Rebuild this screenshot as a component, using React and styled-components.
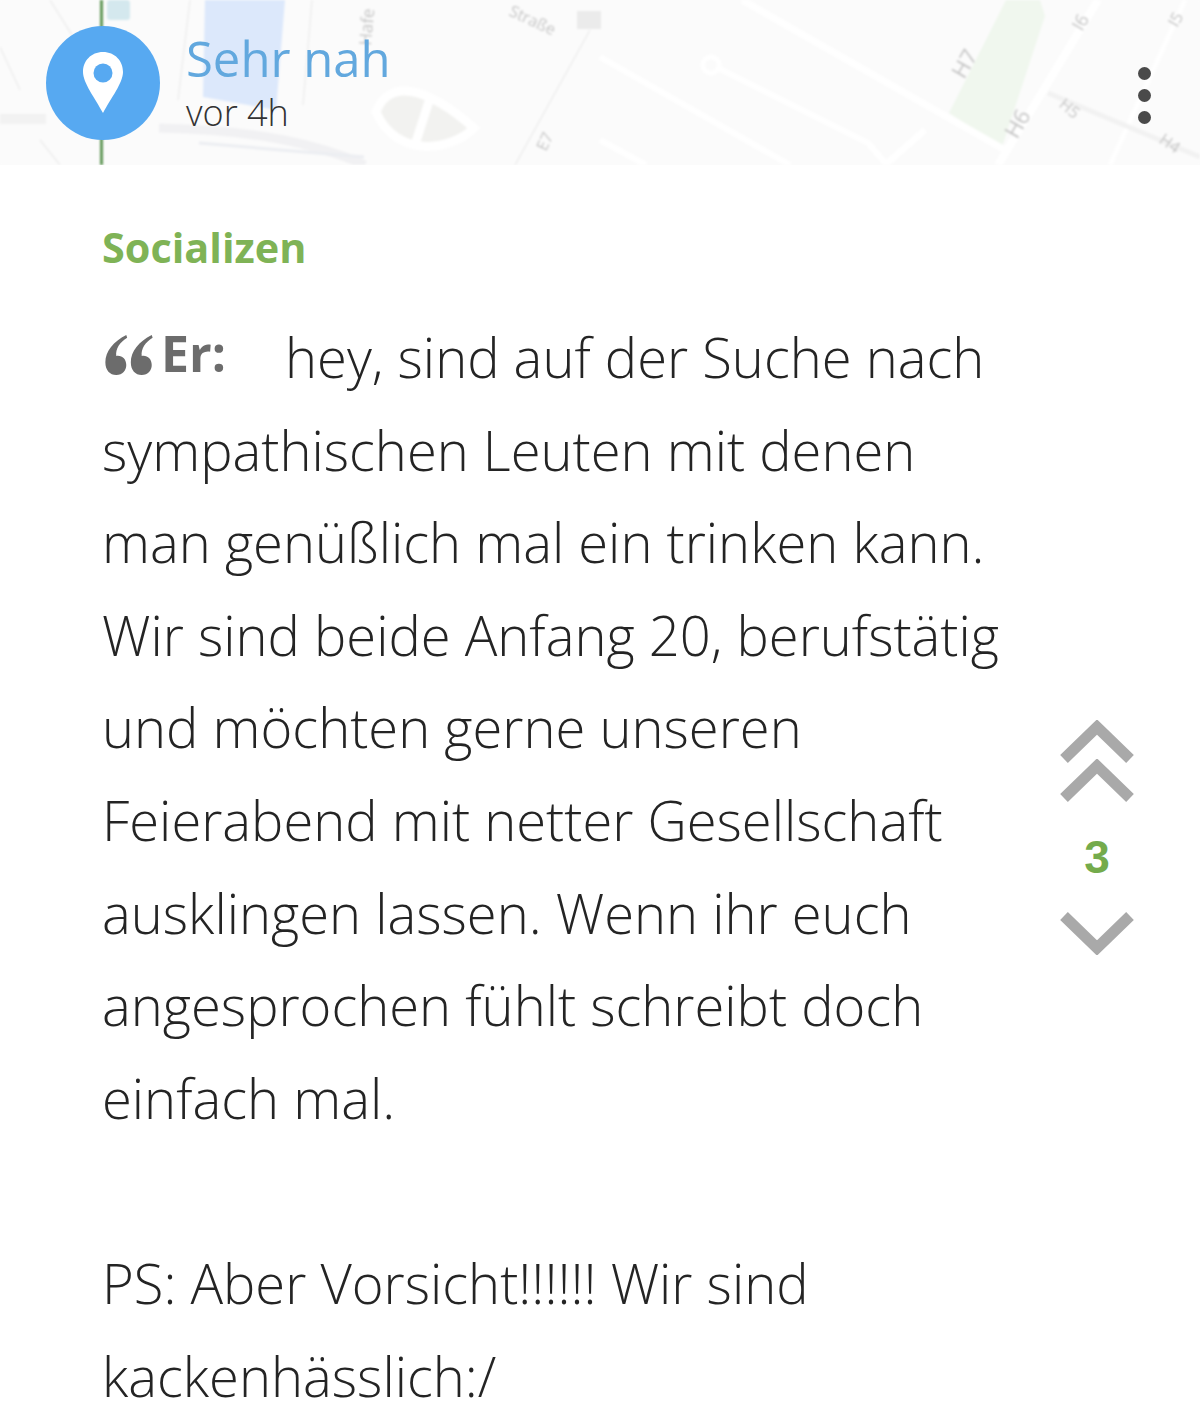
import React from "react";
import styled, { createGlobalStyle } from "styled-components";

const Global = createGlobalStyle`
  html, body { margin: 0; padding: 0; background: #fff; }
  body { font-family: "Open Sans", "Liberation Sans", sans-serif; }
`;
const Page = styled.div`
  width: 1200px;
  height: 1417px;
  overflow: hidden;
  background: #fff;
`;
const Header = styled.header`
  position: relative;
  height: 165px;
  display: flex;
  align-items: center;
  padding: 0 49px 0 46px;
  box-sizing: border-box;
  background: #fbfbfb;
  overflow: hidden;
`;
const MapArt = styled.svg`
  position: absolute;
  inset: 0;
  width: 100%;
  height: 100%;
  filter: blur(0.8px);
`;
const Badge = styled.div`
  position: relative;
  width: 114px;
  height: 114px;
  border-radius: 50%;
  background: #57a9f1;
  display: flex;
  align-items: center;
  justify-content: center;
  flex: none;
`;
const Meta = styled.div`
  position: relative;
  margin-left: 26px;
  display: flex;
  flex-direction: column;
  flex: 1;
`;
const Title = styled.div`
  font-size: 49px;
  line-height: 56px;
  color: #62a8de;
  margin-top: -1px;
`;
const Time = styled.div`
  font-size: 36px;
  line-height: 42px;
  font-weight: 300;
  color: #333;
  margin-top: 6px;
`;
const MoreBtn = styled.div`
  position: relative;
  display: flex;
  flex-direction: column;
  gap: 9px;
  margin-top: 25px;
`;
const Dot = styled.span`
  width: 13px;
  height: 13px;
  border-radius: 50%;
  background: #4a4a4a;
`;
const Body = styled.main`
  display: flex;
  padding: 57px 0 0 102px;
`;
const Content = styled.div`
  width: 956px;
  flex: none;
`;
const Category = styled.div`
  font-size: 41.4px;
  line-height: 50px;
  font-weight: 700;
  color: #7fb356;
  margin-bottom: 39px;
`;
const Line = styled.div`
  font-size: 54.3px;
  line-height: 92.6px;
  height: 92.6px;
  font-weight: 300;
  color: #242424;
  white-space: nowrap;
`;
const Lead = styled.span`
  display: inline-flex;
  align-items: flex-end;
  width: 183px;
  height: 46px;
  vertical-align: 0;
  position: relative;
  top: -3px;
`;
const QuoteMark = styled.svg`
  width: 54px;
  height: 40px;
  flex: none;
`;
const Author = styled.span`
  font-size: 50px;
  line-height: 44px;
  font-weight: 700;
  color: #6c6c6c;
  margin-left: 5px;
`;
const Votes = styled.aside`
  width: 76px;
  margin: 498px 0 0 1px;
  display: flex;
  flex-direction: column;
  align-items: center;
  flex: none;
`;
const Score = styled.div`
  font-family: "Liberation Sans", Arial, sans-serif;
  font-size: 46px;
  line-height: 50px;
  font-weight: 700;
  color: #74ab4c;
  margin: 29px 0 29px;
`;
const ChevronArt = styled.svg`
  display: block;
  width: 76px;
`;
const DoubleUp = styled.div`
  display: flex;
  flex-direction: column;
  & > svg + svg { margin-top: -5px; }
`;

const lines = [
  "sympathischen Leuten mit denen",
  "man genüßlich mal ein trinken kann.",
  "Wir sind beide Anfang 20, berufstätig",
  "und möchten gerne unseren",
  "Feierabend mit netter Gesellschaft",
  "ausklingen lassen. Wenn ihr euch",
  "angesprochen fühlt schreibt doch",
  "einfach mal.",
  "\u00a0",
  "PS: Aber Vorsicht!!!!!! Wir sind",
  "kackenhässlich:/",
];

function MapBackground() {
  const road = { stroke: "#ffffff", fill: "none" };
  const faint = { stroke: "#eeeeee", fill: "none", strokeWidth: 1.5 };
  const label = { fill: "#c6c6c6", fontFamily: "Open Sans, sans-serif" };
  return (
    <MapArt viewBox="0 0 1200 165" aria-hidden="true">
      <rect width="1200" height="165" fill="#fbfbfb" />
      <polygon points="205,0 285,0 276,110 203,97" fill="#dce8fb" />
      <polygon points="1006,0 1040,0 1045,16 1002,147 949,113" fill="#f0f7ee" />
      <g {...road}>
        <path d="M600 57 L790 165" strokeWidth="6" />
        <path d="M742 0 L1005 150" strokeWidth="7" />
        <path d="M718 68 L868 143 L887 165" strokeWidth="6" />
        <path d="M925 130 L885 165" strokeWidth="7" />
        <path d="M1098 0 L998 165" strokeWidth="8" />
        <path d="M1185 0 L1110 165" strokeWidth="5" />
        <circle cx="711" cy="65" r="8" strokeWidth="5" />
        <path d="M600 140 L646 165" strokeWidth="6" />
      </g>
      <g {...faint}>
        <path d="M0 47 L20 90" />
        <path d="M50 0 L72 35" />
        <path d="M0 115 L46 115" />
        <path d="M190 0 L178 100" />
        <path d="M312 0 L303 105" />
        <path d="M590 30 L515 165" />
        <path d="M40 140 L60 165" />
      </g>
      <path d="M1048 93 L1200 157" stroke="#f2f2f2" strokeWidth="5" fill="none" />
      <path d="M159 128 C260 130 320 145 365 165" stroke="#f1f1f3" strokeWidth="9" fill="none" />
      <path d="M199 143 L364 157" stroke="#eceef2" strokeWidth="3" fill="none" />
      <path d="M0 120 L46 120" stroke="#f2f2f2" strokeWidth="8" />
      <path d="M376 112 C388 80 424 84 474 128 C450 152 396 158 376 112 Z" fill="#f2f2f0" stroke="#ffffff" strokeWidth="9" />
      <path d="M430 98 L414 148" stroke="#ffffff" strokeWidth="9" />
      <rect x="100" y="0" width="3" height="165" fill="#5f9655" />
      <rect x="107" y="0" width="23" height="20" rx="3" fill="#d4e8ee" />
      <text x="371" y="46" transform="rotate(-85 371 46)" fontSize="17" {...label}>Hafe</text>
      <text x="508" y="15" transform="rotate(25 508 15)" fontSize="16" {...label}>Straße</text>
      <rect x="577" y="11" width="24" height="18" fill="#ebebeb" />
      <text x="546" y="152" transform="rotate(-65 546 152)" fontSize="16" {...label}>E7</text>
      <text x="964" y="80" transform="rotate(-60 964 80)" fontSize="22" {...label}>H7</text>
      <text x="1017" y="140" transform="rotate(-60 1017 140)" fontSize="22" {...label}>H6</text>
      <text x="1082" y="32" transform="rotate(-60 1082 32)" fontSize="18" {...label}>I6</text>
      <text x="1058" y="106" transform="rotate(40 1058 106)" fontSize="16" {...label}>H5</text>
      <text x="1158" y="142" transform="rotate(35 1158 142)" fontSize="16" {...label}>H4</text>
      <text x="1177" y="28" transform="rotate(-60 1177 28)" fontSize="16" {...label}>I5</text>
    </MapArt>
  );
}

function Chevron({ up }) {
  return (
    <ChevronArt viewBox="0 0 76 44" height="44" aria-hidden="true">
      <path
        d={up ? "M5 39 L38 7 L71 39" : "M5 5 L38 37 L71 5"}
        fill="none"
        stroke="#a9a9a9"
        strokeWidth="11"
      />
    </ChevronArt>
  );
}

export default function App() {
  return (
    <Page>
      <Global />
      <Header>
        <MapBackground />
        <Badge>
          <svg width="40" height="61" viewBox="0 0 40 61" aria-hidden="true">
            <path
              d="M20 0 C8 0 0 9 0 20 C0 31 12 46 20 61 C28 46 40 31 40 20 C40 9 32 0 20 0 Z"
              fill="#ffffff"
            />
            <circle cx="20" cy="21" r="9.5" fill="#57a9f1" />
          </svg>
        </Badge>
        <Meta>
          <Title>Sehr nah</Title>
          <Time>vor 4h</Time>
        </Meta>
        <MoreBtn>
          <Dot />
          <Dot />
          <Dot />
        </MoreBtn>
      </Header>
      <Body>
        <Content>
          <Category>Socializen</Category>
          <Line>
            <Lead>
              <QuoteMark viewBox="0 0 54 44" aria-hidden="true">
                <path
                  d="M24 0 C10 7 1 18 1 30 C1 39 6 44 13 44 C20 44 24 39 24 33 C24 26 19 22 13 23 C12 15 17 8 25 3 Z M52 0 C38 7 29 18 29 30 C29 39 34 44 41 44 C48 44 52 39 52 33 C52 26 47 22 41 23 C40 15 45 8 53 3 Z"
                  fill="#6c6c6c"
                />
              </QuoteMark>
              <Author>Er:</Author>
            </Lead>
            hey, sind auf der Suche nach
          </Line>
          {lines.map((text, i) => (
            <Line key={i}>{text}</Line>
          ))}
        </Content>
        <Votes>
          <DoubleUp>
            <Chevron up />
            <Chevron up />
          </DoubleUp>
          <Score>3</Score>
          <Chevron />
        </Votes>
      </Body>
    </Page>
  );
}
